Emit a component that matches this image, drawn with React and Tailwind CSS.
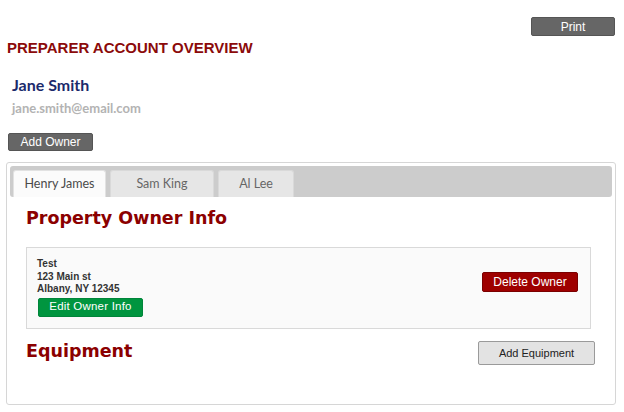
import React from "react";

export default function App() {
  return (
    <div className="w-[624px] h-[412px] bg-white overflow-hidden font-['Liberation_Sans',Arial,sans-serif]">
      <div className="flex justify-end pt-[17px] pr-[9px]">
        <button className="w-[84px] h-[19px] bg-[#666666] border border-[#555] rounded-[2px] text-white text-[12px] leading-none flex items-center justify-center">
          Print
        </button>
      </div>
      <h1 className="mt-[3px] ml-[7px] text-[15px] leading-[18px] font-bold text-[#8b0a0a]">
        PREPARER ACCOUNT OVERVIEW
      </h1>
      <div className="ml-[12px] mt-[18px] font-['Lato',sans-serif] font-bold text-[16px] leading-[20px] text-[#1b2a6b]">
        Jane Smith
      </div>
      <div className="ml-[12px] mt-[5px] font-['Lato',sans-serif] font-bold text-[13px] leading-[16px] text-[#b3b3b3]">
        jane.smith@email.com
      </div>
      <div className="ml-[8px] mt-[17px]">
        <button className="w-[85px] h-[18px] bg-[#666666] border border-[#555] rounded-[2px] text-white text-[12px] leading-none flex items-center justify-center">
          Add Owner
        </button>
      </div>
      <div className="mt-[11px] ml-[6px] w-[610px] h-[243px] border border-[#d6d6d6] rounded-[3px] px-[3px] pt-[3px]">
        <div className="h-[31px] bg-[#cccccc] rounded-[3px] flex items-end gap-[4px] pl-[3px] font-['Lato',sans-serif] text-[12.5px]">
          <div className="w-[93px] h-[27px] bg-[#fbfbfb] rounded-t-[3px] border-t border-x border-[#e2e2e2] flex items-center justify-center text-[#4a4a4a]">
            Henry James
          </div>
          <div className="w-[104px] h-[27px] bg-[#e6e6e6] rounded-t-[3px] border-t border-x border-[#d9d9d9] flex items-center justify-center text-[#666]">
            Sam King
          </div>
          <div className="w-[76px] h-[27px] bg-[#e6e6e6] rounded-t-[3px] border-t border-x border-[#d9d9d9] flex items-center justify-center text-[#666]">
            Al Lee
          </div>
        </div>
        <div className="px-[16px]">
          <h2 className="mt-[11px] font-['DejaVu_Sans',Verdana,sans-serif] font-bold text-[17.5px] leading-[21px] text-[#8b0000]">
            Property Owner Info
          </h2>
          <div className="mt-[18px] mr-[5px] h-[82px] border border-[#d9d9d9] bg-[#fafafa] flex justify-between items-start pl-[10px] pr-[12px] pt-[10px]">
            <div className="flex flex-col">
              <div className="text-[10px] leading-[12.5px] font-bold text-[#333]">
                <div>Test</div>
                <div>123 Main st</div>
                <div>Albany, NY 12345</div>
              </div>
              <button className="mt-[2px] ml-[1px] w-[105px] h-[19px] bg-[#00953f] border border-[#00853a] rounded-[2px] text-white text-[11.5px] tracking-[0.2px] leading-none flex items-center justify-center">
                Edit Owner Info
              </button>
            </div>
            <button className="mt-[14px] w-[96px] h-[20px] bg-[#9e0000] border border-[#7a0000] rounded-[2px] text-white text-[12px] leading-none flex items-center justify-center">
              Delete Owner
            </button>
          </div>
          <div className="mt-[12px] mr-[1px] flex justify-between items-start">
            <h2 className="font-['DejaVu_Sans',Verdana,sans-serif] font-bold text-[17.5px] leading-[21px] text-[#8b0000]">
              Equipment
            </h2>
            <button className="w-[117px] h-[24px] bg-[#e3e3e3] border border-[#9a9a9a] rounded-[2px] text-[#222] text-[11px] leading-none flex items-center justify-center">
              Add Equipment
            </button>
          </div>
        </div>
      </div>
    </div>
  );
}
